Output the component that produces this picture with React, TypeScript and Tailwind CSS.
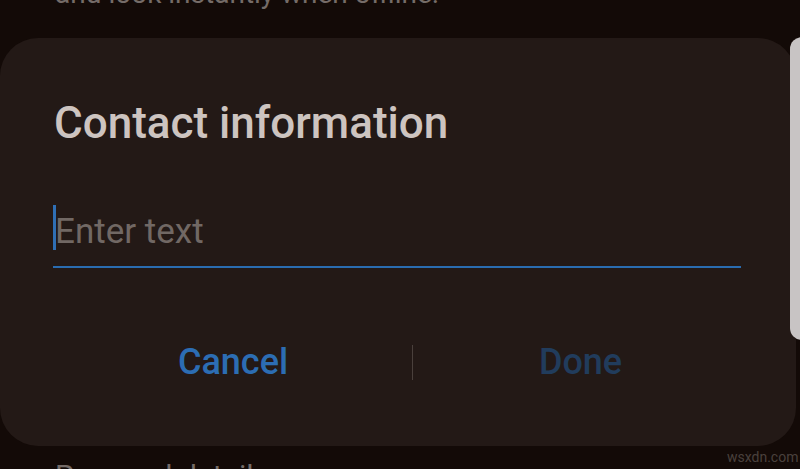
import React from "react";

export default function App() {
  return (
    <div
      className="relative w-[800px] h-[469px] overflow-hidden bg-[#130a07] flex flex-col"
      style={{ fontFamily: "Roboto, 'Noto Sans', sans-serif" }}
    >
      <div className="h-[38px] shrink-0 overflow-hidden pl-[55px]">
        <div className="mt-[-21px] text-[28px] leading-[30px] text-[#756c68] whitespace-nowrap">
          and look instantly when offline.
        </div>
      </div>

      <div className="w-[796px] h-[408px] shrink-0 rounded-[38px] bg-[#231916] flex flex-col pl-[53px] pt-[63px]">
        <div className="text-[44px] leading-[45px] font-medium text-[#cdc4c0] whitespace-nowrap pl-[1px]">
          Contact information
        </div>
        <div className="mt-[59px] h-[45px] flex items-start">
          <div className="w-[3px] h-full bg-[#2f6fb5]" />
          <div className="pt-[9px] text-[35px] leading-[35px] text-[#716864] whitespace-nowrap ml-[-1px]">
            Enter text
          </div>
        </div>
        <div className="mt-[16px] h-[2px] w-[688px] bg-[#2a6cb0]" />
        <div className="mt-[76px] h-[36px] flex items-center ml-[6px]">
          <div className="w-[348px] text-center text-[36px] leading-[36px] font-medium text-[#2c6db3]">
            Cancel
          </div>
          <div className="ml-[5px] w-[1px] h-[35px] bg-[#4a403c]" />
          <div className="w-[335px] text-center text-[36px] leading-[36px] font-medium text-[#213c5c]">
            Done
          </div>
        </div>
      </div>

      <div className="mt-[15px] shrink-0 pl-[55px] text-[30px] leading-[30px] text-[#756c68] whitespace-nowrap">
        Personal details
      </div>

      <div className="absolute left-[790px] top-[37px] w-[14px] h-[303px] rounded-l-[12px] bg-[#c8c4c4]" />
      <div className="absolute left-[727px] top-[449px] text-[14px] leading-[16px] text-[#4a413d]">
        wsxdn.com
      </div>
    </div>
  );
}
